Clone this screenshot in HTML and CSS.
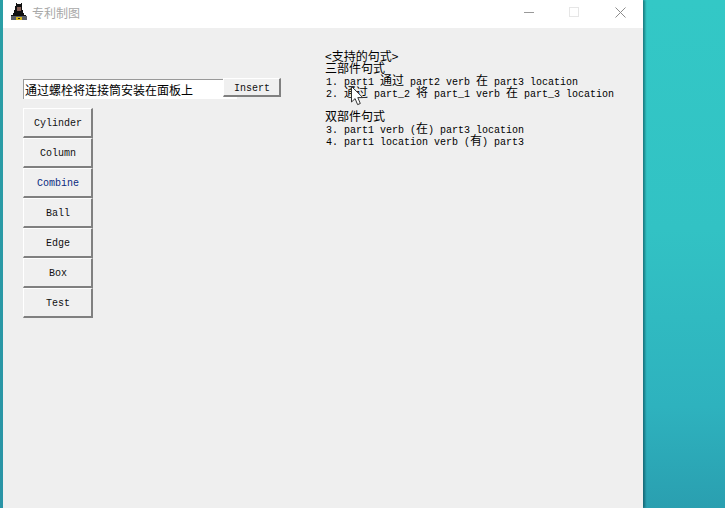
FILE: index.html
```html
<!DOCTYPE html>
<html lang="zh">
<head>
<meta charset="utf-8">
<title>专利制图</title>
<link rel="stylesheet" href="styles.css">
</head>
<body>
<div class="window">
  <header class="titlebar">
    <svg class="app-icon" width="16" height="17" viewBox="0 0 16 17" shape-rendering="crispEdges">
      <path fill="#111" d="M5 0h1v1h4V0h1v7h1v3h1v2h2v2H0v-2h2v-2h1V7h1V3h1z"/>
      <rect x="6" y="4" width="4" height="4" fill="#8a6258"/>
      <rect x="0" y="13" width="16" height="4" fill="#5b5f66"/>
      <rect x="5" y="14" width="6" height="3" fill="#d8b81e"/>
      <rect x="7" y="15" width="2" height="1" fill="#222"/>
    </svg>
    <span class="title">专利制图</span>
    <div class="controls">
      <svg class="ctl" width="45" height="28" viewBox="0 0 45 28"><path d="M16 12.5h10" stroke="#999" stroke-width="1"/></svg>
      <svg class="ctl" width="45" height="28" viewBox="0 0 45 28"><rect x="16.5" y="7.5" width="9" height="9" fill="none" stroke="#e6e6e6"/></svg>
      <svg class="ctl" width="45" height="28" viewBox="0 0 45 28"><path d="M17.5 7.5l10 10M27.5 7.5l-10 10" stroke="#8c8c8c" stroke-width="1"/></svg>
    </div>
  </header>
  <main class="client">
    <section class="left">
      <div class="input-row">
        <input class="field" type="text" value="通过螺栓将连接筒安装在面板上">
        <button class="btn insert"><span class="label">Insert</span></button>
      </div>
      <div class="stack">
        <button class="btn tool"><span class="label">Cylinder</span></button>
        <button class="btn tool"><span class="label">Column</span></button>
        <button class="btn tool blue"><span class="label">Combine</span></button>
        <button class="btn tool"><span class="label">Ball</span></button>
        <button class="btn tool"><span class="label">Edge</span></button>
        <button class="btn tool"><span class="label">Box</span></button>
        <button class="btn tool"><span class="label">Test</span></button>
      </div>
    </section>
    <section class="help">
      <p class="head">&lt;支持的句式&gt;</p>
      <p class="head">三部件句式</p>
      <p class="line">1. part1 <span class="cjk">通过</span> part2 verb <span class="cjk">在</span> part3 location</p>
      <p class="line">2. <span class="cjk">通过</span> part_2 <span class="cjk">将</span> part_1 verb <span class="cjk">在</span> part_3 location</p>
      <p class="head gap">双部件句式</p>
      <p class="line">3. part1 verb (<span class="cjk">在</span>) part3 location</p>
      <p class="line">4. part1 location verb (<span class="cjk">有</span>) part3</p>
    </section>
    <svg class="cursor" width="13" height="20" viewBox="0 0 13 20"><path d="M.5.5v15.5l3.6-3.4 2.5 6 2.7-1.1-2.5-5.9h5z" fill="#fff" stroke="#333" stroke-width="1"/></svg>
  </main>
</div>
</body>
</html>
```
FILE: styles.css
```css
* { box-sizing: border-box; }
html, body { height: 100%; margin: 0; overflow: hidden; }
body {
  background:
    linear-gradient(180deg, #2a9fa6, #2a94a6) left top / 3px 100% no-repeat,
    linear-gradient(180deg, #33c8c6 0%, #32c2c4 45%, #2eb2be 80%, #2a9fb0 100%);
  padding-left: 3px;
  font-family: "Liberation Mono", "Noto Sans CJK SC", monospace;
}
.window {
  width: 640px;
  height: 508px;
  display: flex;
  flex-direction: column;
  box-shadow: 2px 0 2px rgba(0, 40, 50, .45);
}
.titlebar {
  height: 28px;
  background: #fff;
  display: flex;
  align-items: center;
  padding-left: 8px;
  flex: none;
}
.app-icon { margin-top: -6px; flex: none; }
.title {
  margin-left: 5px;
  margin-top: -3px;
  font: 12px "Noto Sans CJK SC", sans-serif;
  color: #a8a8a8;
}
.controls { margin-left: auto; display: flex; }
.ctl { display: block; }
.client {
  flex: 1;
  background: #efefef;
  display: flex;
  position: relative;
}
.left { width: 322px; padding: 50px 0 0 20px; flex: none; }
.input-row { display: flex; align-items: flex-start; height: 30px; }
.field {
  width: 214px;
  height: 20px;
  margin-top: 1px;
  padding: 0 0 1px 1px;
  border: 0;
  border-left: 1px solid #999;
  border-top: 1px solid #999;
  border-radius: 0;
  background: #fff;
  outline: 0;
  font: 12px "Noto Sans CJK SC", sans-serif;
  color: #000;
}
.btn {
  display: block;
  padding: 0;
  margin: 0;
  background: #f0f0f0;
  border-style: solid;
  border-width: 1px 2px 2px 1px;
  border-color: #fff #808080 #808080 #fff;
  border-radius: 0;
  font: 10px "Liberation Mono", monospace;
  color: #111;
  text-align: center;
}
.label { display: block; margin-top: 2px; padding-left: 1px; }
.insert { width: 58px; height: 19px; margin-left: -14px; z-index: 1; }
.stack { display: flex; flex-direction: column; width: 70px; }
.tool { height: 30px; width: 70px; }
.blue { color: #0a2a80; }
.help { padding-top: 22px; flex: none; width: 310px; }
.help p { margin: 0; height: 12px; line-height: 12px; white-space: nowrap; color: #000; }
.head { font: 12px/12px "Noto Sans CJK SC", sans-serif; }
.help .line { font: 10px/12px "Liberation Mono", "Noto Sans CJK SC", monospace; padding-left: 1px; }
.help .gap { margin-top: 12px; }
.cjk { font: 12px/12px "Noto Sans CJK SC", sans-serif; }
.cursor { position: absolute; left: 348px; top: 58px; }
```
